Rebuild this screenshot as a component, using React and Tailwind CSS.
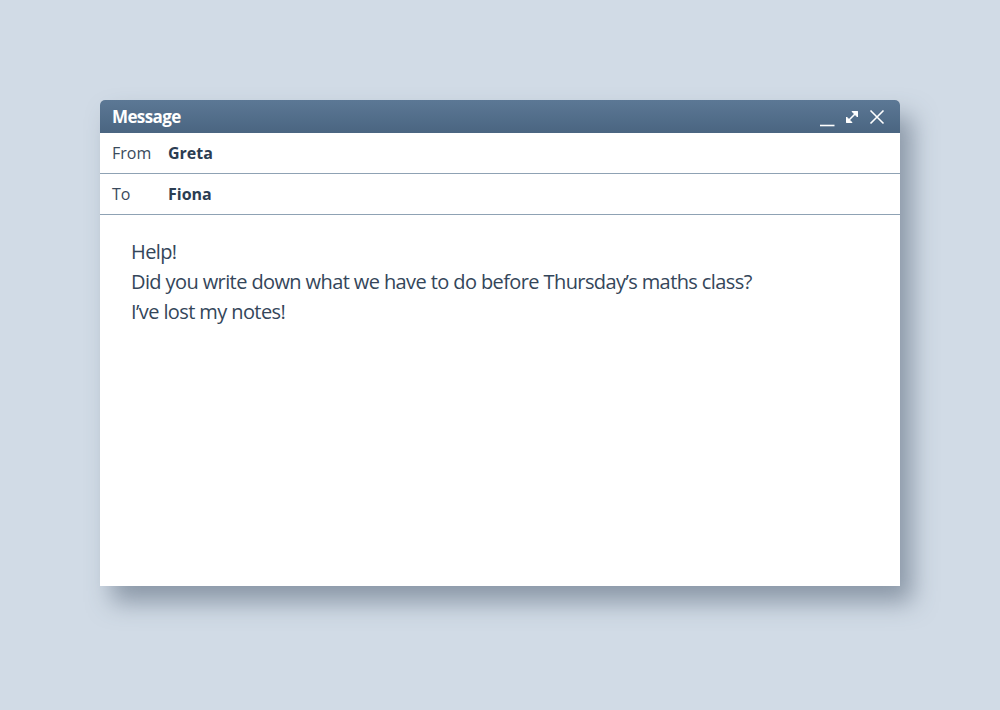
import React from "react";

export default function App() {
  return (
    <div className="w-[1000px] h-[710px] bg-[#d1dbe6] pt-[100px] pl-[100px]" style={{ fontFamily: '"Open Sans", "Noto Sans", sans-serif' }}>
      <div className="w-[800px] h-[486px] bg-white rounded-t-[5px] shadow-[12px_16px_24px_rgba(70,85,105,0.5)] flex flex-col">
        <div className="h-[33px] rounded-t-[5px] bg-gradient-to-b from-[#5c7895] to-[#4a6581] flex items-center justify-between pl-[12px] pr-[15px]">
          <span className="text-white font-bold text-[17px] tracking-[-0.6px]">Message</span>
          <div className="flex items-center gap-[9px] text-white">
            <svg width="16" height="16" viewBox="0 0 16 16" className="mt-[4px]">
              <path d="M1 14.5H15.5" stroke="white" strokeWidth="1.6" />
            </svg>
            <svg width="16" height="16" viewBox="0 0 16 16">
              <path d="M2.5 13.5L13.5 2.5" stroke="white" strokeWidth="1.6" />
              <path d="M8 2.5H13.5V8Z" fill="white" stroke="white" strokeWidth="1" strokeLinejoin="round" />
              <path d="M2.5 8V13.5H8Z" fill="white" stroke="white" strokeWidth="1" strokeLinejoin="round" />
            </svg>
            <svg width="16" height="16" viewBox="0 0 16 16">
              <path d="M1.5 1.5L14.5 14.5M14.5 1.5L1.5 14.5" stroke="white" strokeWidth="1.6" />
            </svg>
          </div>
        </div>
        <div className="h-[41px] border-b border-[#8fa2b4] flex items-center pl-[12px] text-[16px]">
          <span className="w-[56px] text-[#3a4a5c]">From</span>
          <span className="font-bold text-[#2b3d52]">Greta</span>
        </div>
        <div className="h-[41px] border-b border-[#8fa2b4] flex items-center pl-[12px] text-[16px]">
          <span className="w-[56px] text-[#3a4a5c]">To</span>
          <span className="font-bold text-[#2b3d52]">Fiona</span>
        </div>
        <div className="pl-[31px] pt-[22px] text-[20px] leading-[30px] text-[#34465a] tracking-[-0.6px]">
          <div>Help!</div>
          <div>Did you write down what we have to do before Thursday’s maths class?</div>
          <div>I’ve lost my notes!</div>
        </div>
      </div>
    </div>
  );
}
